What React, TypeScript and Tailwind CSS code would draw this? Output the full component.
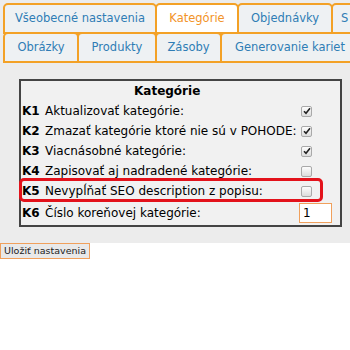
import React from 'react'

const rowOne = [
  { label: 'Všeobecné nastavenia', w: 'w-[154px]' },
  { label: 'Kategórie', w: 'w-[84px]', active: true },
  { label: 'Objednávky', w: 'w-[96px]' },
  { label: 'S', w: 'w-[40px]', left: true },
]

const rowTwo = [
  { label: 'Obrázky', w: 'w-[76px]' },
  { label: 'Produkty', w: 'w-[80px]' },
  { label: 'Zásoby', w: 'w-[67px]' },
  { label: 'Generovanie kariet', w: 'w-[140px]' },
]

type Tab = { label: string; w: string; active?: boolean; left?: boolean }

function TabRow({ tabs, className = '' }: { tabs: Tab[]; className?: string }) {
  return (
    <div className={`flex h-[31px] ${className}`}>
      {tabs.map((t, i) => (
        <div
          key={t.label}
          className={`${t.w} shrink-0 flex items-center whitespace-nowrap border-2 border-[#f3a126] rounded-t-[5px] text-[11.5px] ${
            t.left ? 'justify-start pl-[8px]' : 'justify-center'
          } ${i > 0 ? '-ml-[2px]' : ''} ${t.active ? 'bg-white text-[#f29327]' : 'bg-[#eef1f3] text-[#2f7db5]'}`}
        >
          {t.label}
        </div>
      ))}
    </div>
  )
}

function Check({ on }: { on?: boolean }) {
  return (
    <span className="flex w-[11px] h-[11px] items-center justify-center border border-[#a9a9a9] rounded-[2px] bg-gradient-to-b from-[#fdfdfd] to-[#dcdcdc]">
      {on && (
        <svg width="8" height="8" viewBox="0 0 8 8">
          <path d="M1 4.2 L3 6.3 L7 1.3" stroke="#222" strokeWidth="1.6" fill="none" />
        </svg>
      )}
    </span>
  )
}

const rows = [
  { k: 'K1', text: 'Aktualizovať kategórie:', on: true },
  { k: 'K2', text: 'Zmazať kategórie ktoré nie sú v POHODE:', on: true },
  { k: 'K3', text: 'Viacnásobné kategórie:', on: true },
  { k: 'K4', text: 'Zapisovať aj nadradené kategórie:', on: false },
  { k: 'K5', text: 'Nevypĺňať SEO description z popisu:', on: false, mark: true },
]

export default function App() {
  return (
    <div className="w-[350px] h-[350px] overflow-hidden bg-white font-['DejaVu_Sans',sans-serif]">
      {/* tabs */}
      <div className="bg-[#ececec] pt-[3px] pl-[3px]">
        <TabRow tabs={rowOne} />
        <TabRow tabs={rowTwo} className="-mt-[2px]" />
      </div>

      {/* settings panel */}
      <div className="bg-[#ececec] pl-[19px] pr-[8px] py-[16px]">
        <div className="border-2 border-[#444] bg-[#f1f1f1] px-[1px] text-[12px] text-black">
          <div className="h-[20px] flex items-center pl-[112px] font-bold">Kategórie</div>
          {rows.map((r) => (
            <div key={r.k} className="relative h-[20px] grid grid-cols-[23px_1fr_40px] items-center">
              <span className="font-bold">{r.k}</span>
              <span className="whitespace-nowrap">{r.text}</span>
              <span className="pl-[2px]">
                <Check on={r.on} />
              </span>
              {r.mark && (
                <div className="absolute -left-[3px] -top-[3px] w-[304px] h-[24px] border-[3px] border-[#e3121b] rounded-[5px]" />
              )}
            </div>
          ))}
          <div className="h-[24px] grid grid-cols-[23px_1fr_40px] items-center">
            <span className="font-bold">K6</span>
            <span className="whitespace-nowrap">Číslo koreňovej kategórie:</span>
            <span>
              <span className="block w-[33px] h-[20px] border border-[#f0a05c] bg-white pl-[3px] leading-[18px]">1</span>
            </span>
          </div>
        </div>
      </div>

      <button className="block h-[16px] px-[3px] border border-[#f0a05c] bg-[#e9e9e9] text-[9.5px] leading-[14px] text-[#222] font-['DejaVu_Sans',sans-serif]">
        Uložiť nastavenia
      </button>
    </div>
  )
}
